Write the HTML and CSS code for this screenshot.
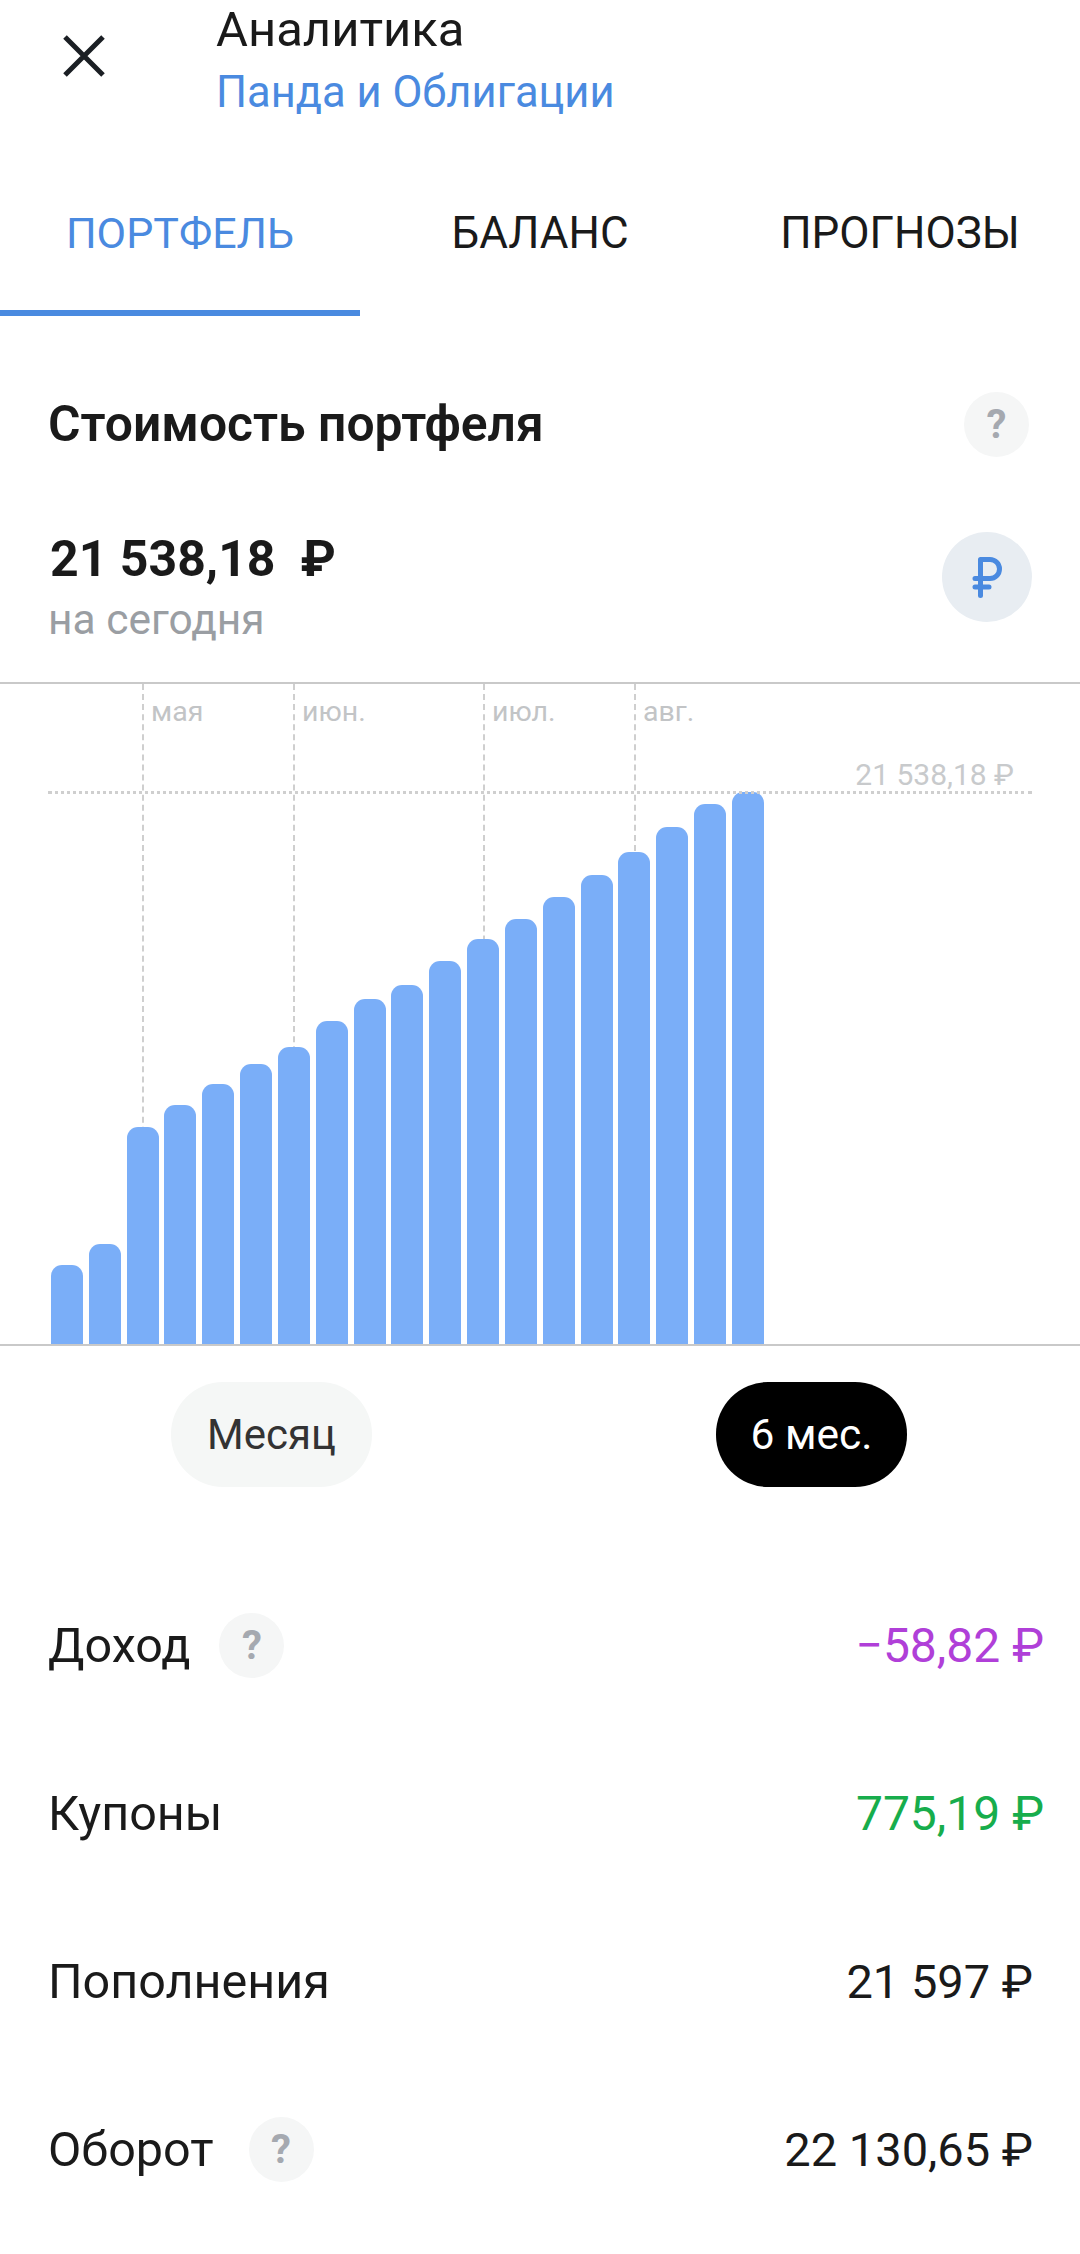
FILE: index.html
```html
<!DOCTYPE html>
<html lang="ru">
<head>
<meta charset="utf-8">
<title>Аналитика</title>
<link rel="stylesheet" href="styles.css">
</head>
<body>
<div class="page">
  <header class="topbar">
    <svg class="close" viewBox="0 0 42 42" width="42" height="42"><path d="M2 2L40 40M40 2L2 40" fill="none" stroke="#1b1f24" stroke-width="5"/></svg>
    <div class="titles">
      <div class="title">Аналитика</div>
      <div class="subtitle">Панда и Облигации</div>
    </div>
  </header>
  <nav class="tabs">
    <div class="tab active">ПОРТФЕЛЬ</div>
    <div class="tab">БАЛАНС</div>
    <div class="tab">ПРОГНОЗЫ</div>
  </nav>
  <section class="head-row">
    <h1 class="heading">Стоимость портфеля</h1>
    <span class="help">?</span>
  </section>
  <section class="value-row">
    <div>
      <div class="value">21 538,18&nbsp; ₽</div>
      <div class="value-note">на сегодня</div>
    </div>
    <span class="currency"><svg viewBox="0 0 30 42" width="30" height="42"><path d="M8.5 39.5V3.5H18A9.5 9.500 0 0 1 18 22.500H3M3 31H17" fill="none" stroke="#4a8ae0" stroke-width="5" stroke-linecap="round" stroke-linejoin="round"/></svg></span>
  </section>
  <section class="chart">
    <div class="vline v1"></div><div class="vline v2"></div><div class="vline v3"></div><div class="vline v4"></div>
    <span class="month m1">мая</span><span class="month m2">июн.</span><span class="month m3">июл.</span><span class="month m4">авг.</span>
    <div class="hline"></div>
    <span class="max-label">21 538,18 ₽</span>
    <div class="bars">
      <div class="bar" style="height:79px"></div>
      <div class="bar" style="height:100px"></div>
      <div class="bar" style="height:217px"></div>
      <div class="bar" style="height:239px"></div>
      <div class="bar" style="height:260px"></div>
      <div class="bar" style="height:280px"></div>
      <div class="bar" style="height:297px"></div>
      <div class="bar" style="height:323px"></div>
      <div class="bar" style="height:345px"></div>
      <div class="bar" style="height:359px"></div>
      <div class="bar" style="height:383px"></div>
      <div class="bar" style="height:405px"></div>
      <div class="bar" style="height:425px"></div>
      <div class="bar" style="height:447px"></div>
      <div class="bar" style="height:469px"></div>
      <div class="bar" style="height:492px"></div>
      <div class="bar" style="height:517px"></div>
      <div class="bar" style="height:540px"></div>
      <div class="bar" style="height:552px"></div>
    </div>
  </section>
  <section class="periods">
    <button class="pill pill-light">Месяц</button>
    <button class="pill pill-dark">6 мес.</button>
  </section>
  <section class="stats">
    <div class="stat">
      <div class="stat-label"><span>Доход</span><span class="help">?</span></div>
      <div class="stat-value neg">−58,82 ₽</div>
    </div>
    <div class="stat">
      <div class="stat-label"><span>Купоны</span></div>
      <div class="stat-value pos">775,19 ₽</div>
    </div>
    <div class="stat">
      <div class="stat-label"><span>Пополнения</span></div>
      <div class="stat-value">21 597 ₽</div>
    </div>
    <div class="stat">
      <div class="stat-label"><span>Оборот</span><span class="help help-wide">?</span></div>
      <div class="stat-value">22 130,65 ₽</div>
    </div>
  </section>
</div>
</body>
</html>
```
FILE: styles.css
```css
* { box-sizing: border-box; }
html, body { margin: 0; padding: 0; background: #fff; }
body { font-family: Roboto, "Noto Sans", sans-serif; color: #1a1a1a; }
.page { width: 1080px; height: 2254px; overflow: hidden; }

.topbar { height: 122px; display: flex; padding-left: 63px; gap: 111px; }
.close { margin-top: 35px; flex: none; }
.titles { padding-top: 4px; }
.title { font-size: 49px; line-height: 52px; }
.subtitle { font-size: 43.5px; line-height: 74px; color: #4a8ae0; }

.tabs { display: grid; grid-template-columns: repeat(3, 360px); height: 194px; }
.tab { height: 194px; display: flex; align-items: center; justify-content: center; font-size: 44px; padding-top: 34px; border-bottom: 6px solid transparent; }
.tab.active { font-size: 43px; color: #4a8ae0; border-bottom-color: #4a8ae0; }

.head-row { display: flex; justify-content: space-between; align-items: center; padding: 76px 51px 0 48px; }
.heading { margin: 0; font-size: 49.8px; font-weight: 600; line-height: 65px; }
.help { width: 65px; height: 65px; flex: none; border-radius: 50%; background: #f5f6f6; color: #a5a9b0; font-size: 40px; font-weight: 700; display: flex; align-items: center; justify-content: center; }
.help-wide { margin-left: 6px; }

.value-row { display: flex; justify-content: space-between; padding: 75px 48px 0 50px; height: 225px; }
.value { font-size: 50px; font-weight: 700; line-height: 54px; }
.value-note { font-size: 42.5px; line-height: 68px; color: #9a9ea3; margin-left: -2px; }
.currency { width: 90px; height: 90px; border-radius: 50%; background: #e8edf2; display: flex; align-items: center; justify-content: center; }

.chart { position: relative; height: 664px; border-top: 2px solid #c9c9c9; border-bottom: 2px solid #c9c9c9; }
.vline { position: absolute; top: 0; bottom: 0; width: 0; border-left: 2px dashed #cfcfcf; }
.v1 { left: 142px; } .v2 { left: 293px; } .v3 { left: 483px; } .v4 { left: 634px; }
.month { position: absolute; top: 13px; font-size: 28.5px; line-height: 30px; color: #c2c4c6; }
.m1 { left: 151px; } .m2 { left: 302px; } .m3 { left: 492px; } .m4 { left: 643px; }
.hline { position: absolute; left: 48px; right: 48px; top: 107px; border-top: 3px dotted #cfcfcf; z-index: 2; }
.max-label { position: absolute; right: 66px; top: 73px; font-size: 30px; line-height: 36px; color: #c8cacc; }
.bars { position: absolute; left: 51px; bottom: 0; height: 560px; display: flex; align-items: flex-end; gap: 5.83px; z-index: 1; }
.bar { width: 32px; background: #7aaef8; border-radius: 11px 11px 0 0; }

.periods { height: 208px; display: flex; padding: 36px 173px 0 171px; justify-content: space-between; align-items: flex-start; }
.pill { border: 0; height: 105px; border-radius: 52px; font-family: inherit; font-size: 42px; padding: 0; }
.pill-light { width: 201px; background: #f5f7f6; color: #333; }
.pill-dark { width: 191px; background: #000; color: #fff; font-size: 42.5px; }

.stats { display: flex; flex-direction: column; padding: 0 47px 0 48px; margin-top: 7px; }
.stat { height: 168px; display: flex; justify-content: space-between; align-items: center; font-size: 48.5px; }
.stat-label { display: flex; align-items: center; gap: 29px; }
.stat-value { font-size: 47px; }
.neg { color: #b03fd8; font-size: 48px; margin-right: -11px; }
.pos { color: #17ad4c; font-size: 48px; margin-right: -11px; }
```
